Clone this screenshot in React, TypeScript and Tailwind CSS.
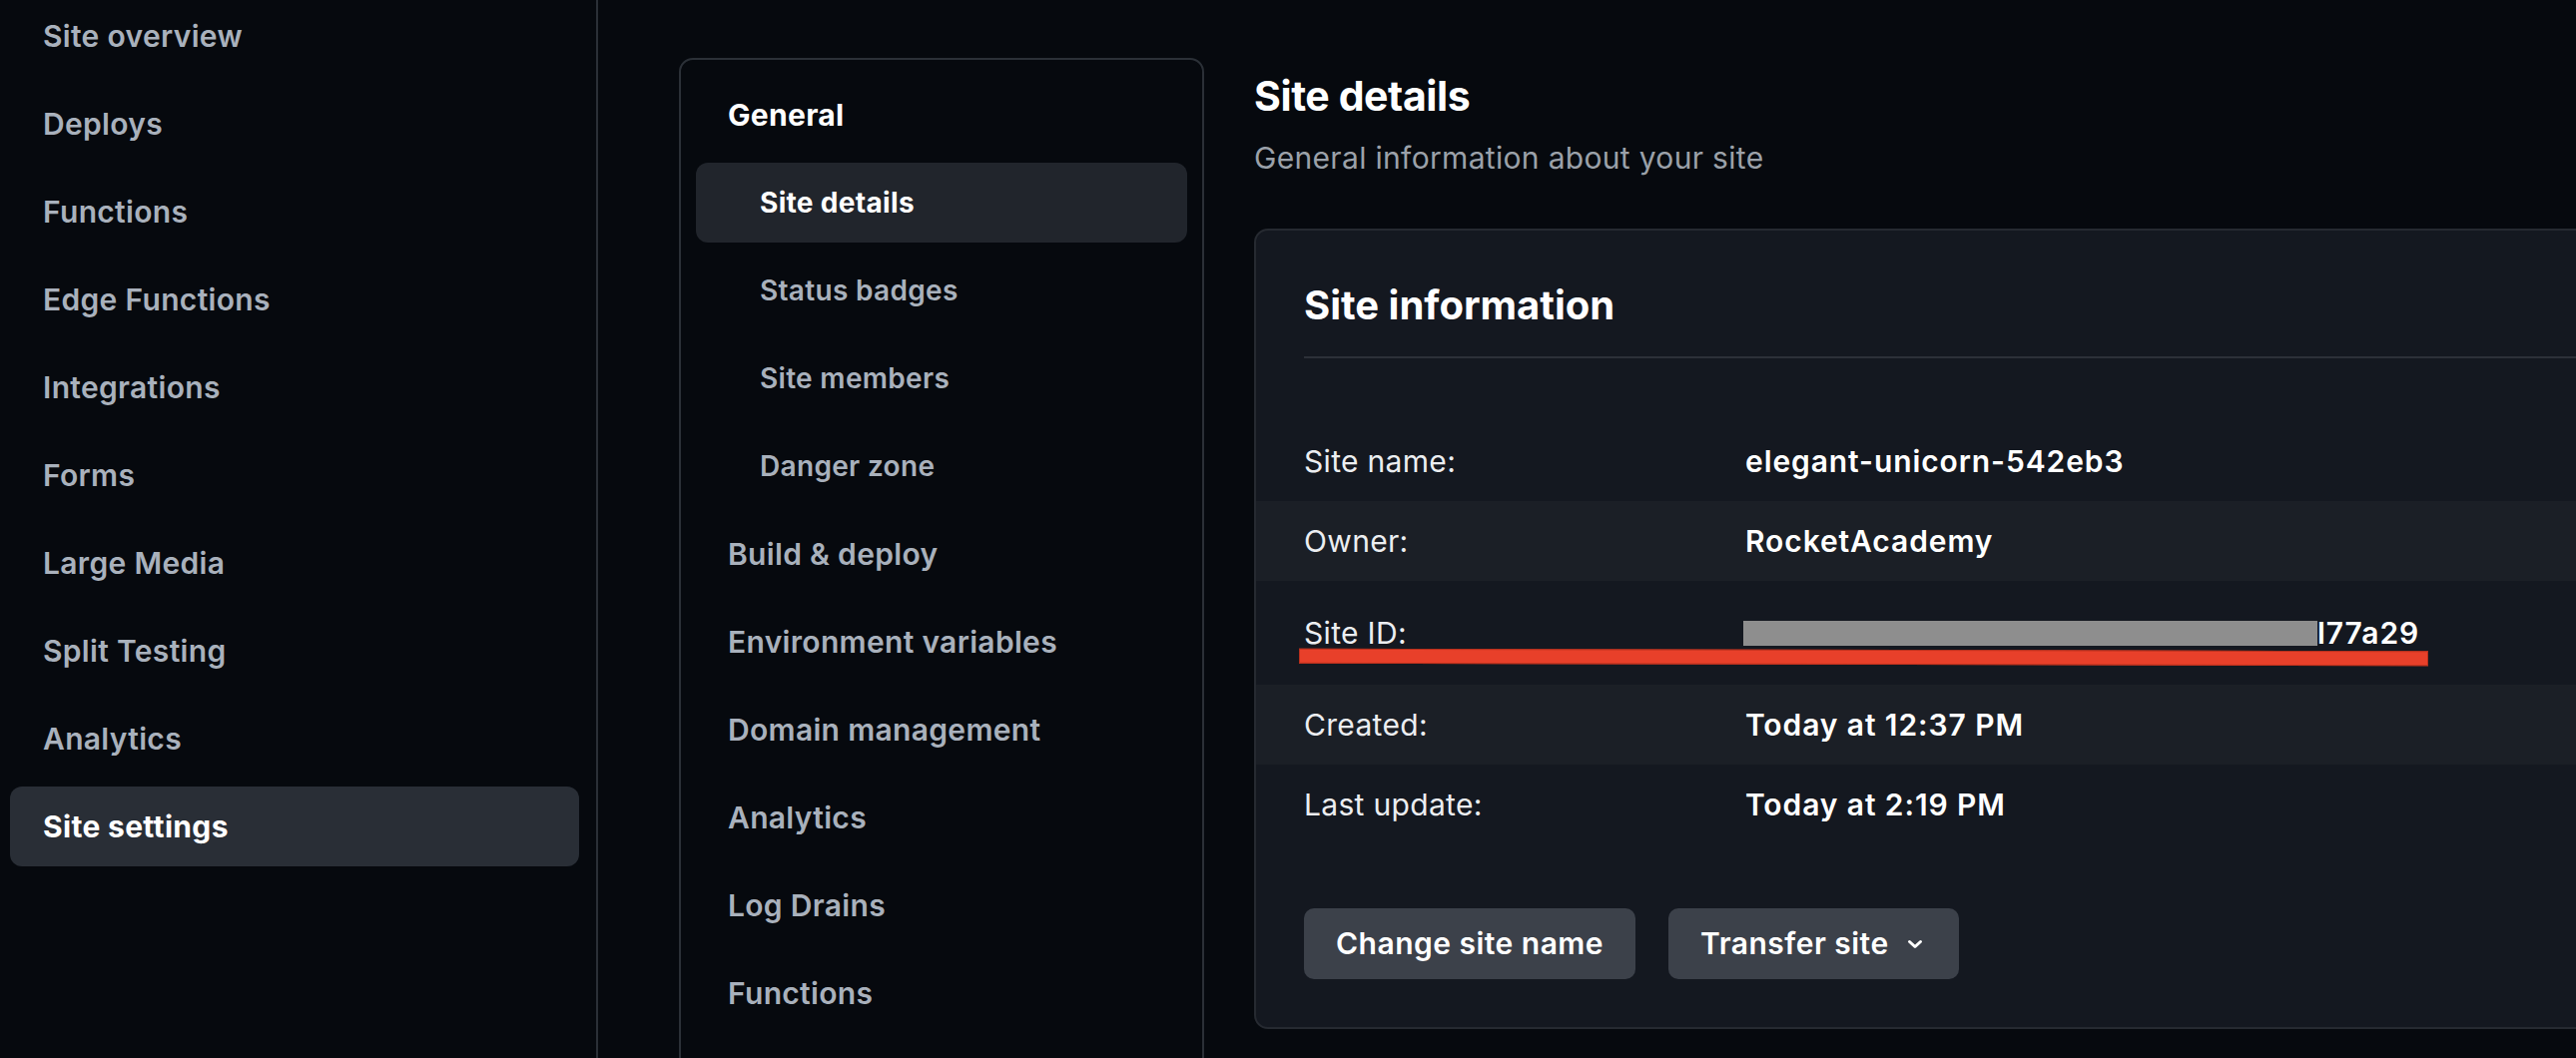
const siteNav = [
  "Site overview",
  "Deploys",
  "Functions",
  "Edge Functions",
  "Integrations",
  "Forms",
  "Large Media",
  "Split Testing",
  "Analytics",
  "Site settings",
];

const generalItems = ["Site details", "Status badges", "Site members", "Danger zone"];

const sections = [
  "Build & deploy",
  "Environment variables",
  "Domain management",
  "Analytics",
  "Log Drains",
  "Functions",
];

const rows = [
  { label: "Site name:", value: "elegant-unicorn-542eb3", tall: false, band: false },
  { label: "Owner:", value: "RocketAcademy", tall: false, band: true },
  { label: "Site ID:", value: "", tall: true, band: false },
  { label: "Created:", value: "Today at 12:37 PM", tall: false, band: true },
  { label: "Last update:", value: "Today at 2:19 PM", tall: false, band: false },
];

function Chevron() {
  return (
    <svg width="16" height="12" viewBox="0 0 16 12" fill="none" className="ml-[18px]">
      <path d="M2.5 3.5 8 8.5l5.5-5" stroke="white" strokeWidth="3" strokeLinecap="round" strokeLinejoin="round" />
    </svg>
  );
}

function SiteSidebar() {
  return (
    <aside className="w-[599px] shrink-0 border-r-2 border-[#2b3037] px-[10px] pr-[17px]">
      <ul className="-mt-1 flex flex-col gap-2">
        {siteNav.map((item) => {
          const active = item === "Site settings";
          return (
            <li
              key={item}
              className={`flex h-20 items-center rounded-[12px] pl-[33px] text-[30px] ${
                active ? "bg-[#292e36] font-bold text-white" : "font-semibold text-[#a9b1bc]"
              }`}
            >
              {item}
            </li>
          );
        })}
      </ul>
    </aside>
  );
}

function SettingsNav() {
  return (
    <nav className="h-[1100px] w-[526px] shrink-0 rounded-[14px] border-2 border-[#2b3037] px-[15px] pt-[15px]">
      <ul className="flex flex-col gap-2">
        <li className="flex h-20 items-center pl-8 text-[30px] font-bold text-white">General</li>
        {generalItems.map((item, i) => (
          <li
            key={item}
            className={`flex h-20 items-center rounded-[12px] pl-16 text-[28px] ${
              i === 0 ? "bg-[#21252c] font-bold text-white" : "font-semibold text-[#a9b1bc]"
            }`}
          >
            {item}
          </li>
        ))}
        {sections.map((item) => (
          <li key={item} className="flex h-20 items-center pl-8 text-[30px] font-semibold text-[#a9b1bc]">
            {item}
          </li>
        ))}
      </ul>
    </nav>
  );
}

function SiteInformation() {
  return (
    <section className="mt-[51px] w-[1500px] rounded-[14px] border-2 border-[#262a31] bg-[#141820] pt-[51px] pb-[48px]">
      <div className="pl-[48px]">
        <h2 className="text-[40px] leading-[48px] font-bold tracking-normal text-white">Site information</h2>
        <div className="mt-[27px] h-[2px] bg-[#2c3038]" />
      </div>
      <div className="mt-[63px]">
        {rows.map((row) => (
          <div
            key={row.label}
            className={`relative flex items-center pl-[48px] text-[30px] ${row.tall ? "h-[104px]" : "h-20"} ${
              row.band ? "bg-[#1b1f26]" : ""
            }`}
          >
            <span className="w-[442px] shrink-0 text-[#eceef1]">{row.label}</span>
            {row.tall ? (
              <span className="flex items-center font-semibold tracking-[0.03em] text-white">
                <span className="-ml-[2px] inline-block h-[25px] w-[575px] bg-[#8e8e8e]" />
                <span>l77a29</span>
              </span>
            ) : (
              <span className="font-semibold tracking-[0.03em] text-white">{row.value}</span>
            )}
            {row.tall ? (
              <span className="absolute top-[69px] left-[43px] h-[15px] w-[1131px] rotate-[0.12deg] border border-[#b8301d] bg-[#e8402a]" />
            ) : null}
          </div>
        ))}
      </div>
      <div className="mt-16 flex gap-[33px] pl-[48px] tracking-[0.03em]">
        <button className="flex h-[71px] items-center rounded-[10px] bg-[#3c414a] px-8 text-[30px] font-semibold text-white">
          Change site name
        </button>
        <button className="flex h-[71px] items-center rounded-[10px] bg-[#3c414a] pr-9 pl-8 text-[30px] font-semibold text-white">
          Transfer site
          <Chevron />
        </button>
      </div>
    </section>
  );
}

export default function App() {
  return (
    <div className="flex h-[1060px] w-[2580px] overflow-hidden bg-[#06090e] font-['Inter',sans-serif] tracking-[0.02em] antialiased">
      <SiteSidebar />
      <main className="flex flex-1 gap-[50px] pt-[58px] pl-[81px]">
        <SettingsNav />
        <div className="flex flex-col pt-[12px]">
          <h1 className="text-[41px] leading-[52px] font-bold tracking-[-0.01em] text-white">Site details</h1>
          <p className="mt-4 text-[30px] leading-[40px] text-[#9ba1a9]">General information about your site</p>
          <SiteInformation />
        </div>
      </main>
    </div>
  );
}
